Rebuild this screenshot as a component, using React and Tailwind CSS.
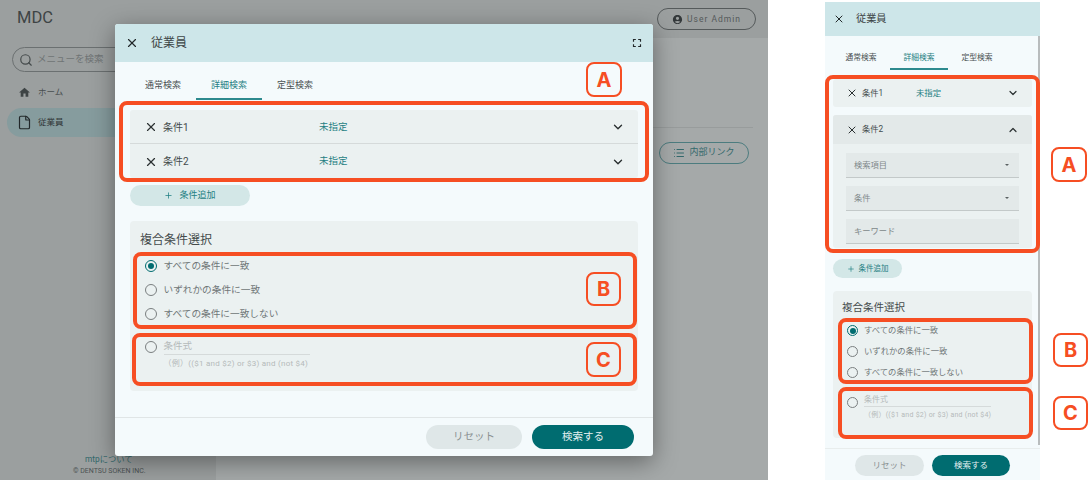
import { X, ChevronDown, ChevronUp, Plus, Search, File, List } from "lucide-react";

const font = { fontFamily: '"Roboto", "Noto Sans CJK JP", sans-serif' };

function MuiIcon({ d, size, className }) {
  return (
    <svg width={size} height={size} viewBox="0 0 24 24" fill="currentColor" className={className}>
      <path d={d} />
    </svg>
  );
}

const fullscreenPath = "M7 14H5v5h5v-2H7v-3zm-2-4h2V7h3V5H5v5zm12 7h-3v2h5v-5h-2v3zM14 5v2h3v3h2V5h-5z";
const homePath = "M10 20v-6h4v6h5v-8h3L12 3 2 12h3v8z";
const accountPath = "M12 2C6.48 2 2 6.48 2 12s4.48 10 10 10 10-4.48 10-10S17.52 2 12 2zm0 4c1.93 0 3.5 1.57 3.5 3.5S13.93 13 12 13s-3.5-1.57-3.5-3.5S10.07 6 12 6zm0 14c-2.03 0-4.43-.82-6.14-2.88C7.55 15.8 9.68 15 12 15s4.45.8 6.14 2.12C16.43 19.18 14.03 20 12 20z";

function Radio({ checked, size = 12 }) {
  return (
    <span
      className={`flex shrink-0 items-center justify-center rounded-full border-[1.5px] ${checked ? "border-[#006c70]" : "border-[#7a7f80]"}`}
      style={{ width: size, height: size }}
    >
      {checked && <span className="block h-[6px] w-[6px] rounded-full bg-[#006c70]" />}
    </span>
  );
}

function Badge({ letter, className }) {
  return (
    <div className={`flex items-center justify-center rounded-[8px] border-2 border-[#f64e23] text-[20px] font-bold text-[#f64e23] ${className}`} style={{ fontFamily: '"Inter", sans-serif' }}>
      {letter}
    </div>
  );
}

function Redbox({ className }) {
  return <div className={`pointer-events-none absolute rounded-[8px] border-[4px] border-[#f64e23] ${className}`} />;
}

function Tabs({ small }) {
  return (
    <div className={small ? "flex h-[34px] pl-[7px] text-[7.8px]" : "flex h-[38px] pl-[15px] text-[9px]"}>
      {["通常検索", "詳細検索", "定型検索"].map((t, i) => (
        <div
          key={t}
          className={`flex items-center justify-center pt-[11px] ${small ? "w-[58px]" : "w-[66px]"} ${i === 1 ? "border-b-2 border-[#2d8a8e] text-[#1f7f83]" : "border-b-2 border-transparent text-[#4a5152]"}`}
        >
          {t}
        </div>
      ))}
    </div>
  );
}

function Condition({ label, divider }) {
  return (
    <div className={`flex h-[34px] items-center pl-[14px] pr-[13px] pt-[1px] ${divider ? "border-b border-[#d5dada]" : ""}`}>
      <X size={14} strokeWidth={2} className="text-[#2b3132]" />
      <span className="ml-[5px] w-[156px] text-[10px] text-[#444b4c]">{label}</span>
      <span className="text-[9.5px] text-[#1f7f83]">未指定</span>
      <ChevronDown size={14} strokeWidth={2.4} className="ml-auto text-[#2b3132]" />
    </div>
  );
}

function MainModal() {
  return (
    <div className="absolute left-[115px] top-[24px] flex h-[432px] w-[538px] flex-col overflow-hidden rounded-[3px] bg-[#f4fafc] shadow-[0_6px_24px_rgba(0,0,0,0.4)]">
      <div className="flex h-[38px] shrink-0 items-center bg-[#cde6e9] pl-[10px] pr-[9px]">
        <X size={14} strokeWidth={2} className="text-[#22282a]" />
        <span className="ml-[12px] text-[12px] text-[#3d4546]">従業員</span>
        <MuiIcon d={fullscreenPath} size={14} className="ml-auto text-[#22282a]" />
      </div>
      <Tabs />
      <div className="mx-[15px] mt-[10px] rounded-[3px] bg-[#ebf1f1]">
        <Condition label="条件1" divider />
        <Condition label="条件2" />
      </div>
      <button className="ml-[15px] mt-[7px] flex h-[21px] w-[120px] items-center justify-center gap-[6px] rounded-full bg-[#d3e7e7] text-[9px] text-[#1f7f83]">
        <Plus size={9} strokeWidth={2} />
        条件追加
      </button>
      <div className="mx-[15px] mt-[15px] h-[170px] rounded-[4px] bg-[#ebf1f1] pl-[10px] pt-[11px]">
        <div className="text-[12px] leading-[16px] text-[#444b4c]">複合条件選択</div>
        <div className="ml-[5px] mt-[12px] flex flex-col gap-[12px] text-[9.67px] text-[#6f7677]">
          <div className="flex h-[12px] items-center gap-[6.5px]"><Radio checked />すべての条件に一致</div>
          <div className="flex h-[12px] items-center gap-[6.5px]"><Radio />いずれかの条件に一致</div>
          <div className="flex h-[12px] items-center gap-[6.5px]"><Radio />すべての条件に一致しない</div>
        </div>
        <div className="ml-[5px] mt-[21px] flex gap-[6.5px]">
          <Radio />
          <div className="w-[146px]">
            <div className="h-[14px] border-b border-[#d5dada] text-[9.5px] leading-[10px] text-[#b5baba]">条件式</div>
            <div className="mt-[4px] whitespace-nowrap text-[8px] leading-[10px] tracking-[0.25px] text-[#b5baba]">（例）(($1 and $2) or $3) and (not $4)</div>
          </div>
        </div>
      </div>
      <div className="mt-auto flex h-[39px] shrink-0 items-start justify-end gap-[10px] border-t border-[#e0e5e6] pr-[19px] pt-[7px]">
        <button className="flex h-[24px] w-[96px] items-center justify-center rounded-full bg-[#dfe7e8] text-[10.5px] text-[#8a9192]">リセット</button>
        <button className="flex h-[24px] w-[102px] items-center justify-center rounded-full bg-[#006c70] text-[10.5px] text-[#e4f0f0]">検索する</button>
      </div>
      <Redbox className="left-[4px] top-[77px] h-[81px] w-[530px]" />
      <Redbox className="left-[18px] top-[228px] h-[77px] w-[504px]" />
      <Redbox className="left-[17px] top-[309px] h-[53px] w-[505px]" />
      <Badge letter="A" className="absolute left-[471px] top-[38px] h-[35px] w-[36px]" />
      <Badge letter="B" className="absolute left-[471px] top-[248px] h-[34px] w-[35px]" />
      <Badge letter="C" className="absolute left-[471px] top-[318px] h-[35px] w-[35px]" />
    </div>
  );
}

function Field({ label, select }) {
  return (
    <div className="flex h-[25px] items-center justify-between border-b border-[#c3c9c9] bg-[#e3e9e9] px-[8px] text-[8.25px] text-[#80888a]">
      {label}
      {select && <span className="mr-[2px] h-0 w-0 border-x-[2px] border-t-[2px] border-x-transparent border-t-[#5a6162]" />}
    </div>
  );
}

function SidePanel() {
  return (
    <div className="relative ml-[57px] mt-[2px] flex h-[478px] w-[215px] flex-col overflow-hidden bg-[#f4fafc]">
      <div className="flex h-[34px] shrink-0 items-center bg-[#cde6e9] pl-[8px]">
        <X size={12} strokeWidth={2} className="text-[#22282a]" />
        <span className="ml-[11px] text-[10.2px] text-[#3d4546]">従業員</span>
      </div>
      <Tabs small />
      <div className="mx-[8px] mt-[9px] flex h-[28px] items-center rounded-[3px] bg-[#ebf1f1] pl-[13px] pr-[13px] text-[8.3px] text-[#444b4c]">
        <X size={12} strokeWidth={2} className="text-[#2b3132]" />
        <span className="ml-[4px] w-[54px]">条件1</span>
        <span className="text-[8.4px] text-[#1f7f83]">未指定</span>
        <ChevronDown size={12} strokeWidth={2.4} className="ml-auto text-[#2b3132]" />
      </div>
      <div className="mx-[8px] mt-[8px] h-[133px] rounded-[3px] bg-[#ebf1f1]">
        <div className="flex h-[29px] items-center rounded-t-[3px] bg-[#e3e9e9] pl-[13px] pr-[13px] text-[8.3px] text-[#444b4c]">
          <X size={12} strokeWidth={2} className="text-[#2b3132]" />
          <span className="ml-[4px]">条件2</span>
          <ChevronUp size={12} strokeWidth={2.4} className="ml-auto text-[#2b3132]" />
        </div>
        <div className="mx-[13px] mt-[9px] flex flex-col gap-[8px]">
          <Field label="検索項目" select />
          <Field label="条件" select />
          <Field label="キーワード" />
        </div>
      </div>
      <button className="ml-[8px] mt-[11px] flex h-[19px] w-[69px] items-center justify-center gap-[4px] rounded-full bg-[#d3e7e7] text-[7.5px] text-[#1f7f83]">
        <Plus size={8} strokeWidth={2} />
        条件追加
      </button>
      <div className="mx-[8px] mt-[13px] h-[147px] rounded-[4px] bg-[#ebf1f1] pl-[9px] pt-[10px]">
        <div className="text-[10.5px] leading-[14px] text-[#444b4c]">複合条件選択</div>
        <div className="ml-[5px] mt-[10px] flex flex-col gap-[10px] text-[8.33px] text-[#6f7677]">
          <div className="flex h-[11px] items-center gap-[6px]"><Radio checked size={11} />すべての条件に一致</div>
          <div className="flex h-[11px] items-center gap-[6px]"><Radio size={11} />いずれかの条件に一致</div>
          <div className="flex h-[11px] items-center gap-[6px]"><Radio size={11} />すべての条件に一致しない</div>
        </div>
        <div className="ml-[5px] mt-[19px] flex gap-[6px]">
          <Radio size={11} />
          <div className="w-[127px]">
            <div className="-mt-[2px] h-[12px] border-b border-[#d5dada] text-[8px] leading-[9px] text-[#b5baba]">条件式</div>
            <div className="mt-[4px] whitespace-nowrap text-[7px] leading-[9px] tracking-[0.24px] text-[#b5baba]">（例）(($1 and $2) or $3) and (not $4)</div>
          </div>
        </div>
      </div>
      <div className="mt-auto flex h-[32px] shrink-0 items-start justify-center gap-[8px] border-t border-[#e8eded] pt-[6px]">
        <button className="flex h-[21px] w-[69px] items-center justify-center rounded-full bg-[#dfe7e8] text-[8.5px] text-[#8a9192]">リセット</button>
        <button className="flex h-[21px] w-[78px] items-center justify-center rounded-full bg-[#006c70] text-[8.5px] text-[#e4f0f0]">検索する</button>
      </div>
      <div className="absolute right-0 top-[34px] h-[409px] w-[2px] bg-[#b8bcbd]" />
      <Redbox className="left-0 top-[73px] h-[178px] w-[215px]" />
      <Redbox className="left-[13px] top-[316px] h-[66px] w-[195px]" />
      <Redbox className="left-[13px] top-[385px] h-[52px] w-[195px]" />
    </div>
  );
}

export default function App() {
  return (
    <div className="relative flex h-[480px] w-[1088px] overflow-hidden bg-white" style={font}>
      <div className="relative flex h-full w-[768px] shrink-0 bg-[#a5a9a9]">
        <aside className="flex h-full w-[216px] shrink-0 flex-col bg-[#9b9f9f]">
          <div className="ml-[17px] mt-[9px] text-[16.5px] leading-[18px] text-[#3e4445]">MDC</div>
          <div className="ml-[12px] mt-[20px] flex h-[25px] w-[180px] items-center rounded-full border border-[#6b7071] pl-[6px] text-[9.5px] text-[#6f7475]">
            <Search size={14} strokeWidth={2} className="mr-[4px] text-[#444a4b]" />
            メニューを検索
          </div>
          <div className="ml-[18px] mt-[11px] flex h-[18px] items-center text-[8.5px] text-[#484e4f]">
            <MuiIcon d={homePath} size={13} className="mr-[7px] text-[#3e4445]" />
            ホーム
          </div>
          <div className="ml-[7px] mt-[7px] flex h-[29px] w-[200px] items-center rounded-l-full bg-[#869c9e] pl-[10px] text-[8.5px] text-[#2f3536]">
            <File size={15} strokeWidth={1.9} className="mr-[6px] text-[#22282a]" />
            従業員
          </div>
          <div className="mt-auto pb-[4px] pl-[73px]">
            <div className="pl-[12px] text-[8.3px] leading-[12px] text-[#33686b]">mtpについて</div>
            <div className="mt-[1px] text-[7px] leading-[10px] text-[#4c5253]">© DENTSU SOKEN INC.</div>
          </div>
        </aside>
        <main className="flex-1">
          <div className="flex h-[38px] justify-end bg-[#9b9f9f] pr-[12px] pt-[8px]">
            <div className="flex h-[22px] w-[99px] items-center justify-center gap-[4px] rounded-full border border-[#555a5b] text-[8.5px] tracking-[1px] text-[#55595a]">
              <MuiIcon d={accountPath} size={11} className="text-[#33383a]" />
              User Admin
            </div>
          </div>
          <div className="ml-[437px] mr-[15px] mt-[89px] border-t border-[#989c9c]" />
          <div className="ml-[443px] mt-[14px] flex h-[22px] w-[90px] items-center justify-center gap-[4px] rounded-full border border-[#4c7c7f] text-[9px] text-[#33686b]">
            <List size={12} strokeWidth={2} />
            内部リンク
          </div>
        </main>
        <MainModal />
      </div>
      <SidePanel />
      <Badge letter="A" className="absolute left-[1051px] top-[147px] h-[35px] w-[36px]" />
      <Badge letter="B" className="absolute left-[1053px] top-[333px] h-[34px] w-[35px]" />
      <Badge letter="C" className="absolute left-[1053px] top-[396px] h-[34px] w-[35px]" />
    </div>
  );
}
